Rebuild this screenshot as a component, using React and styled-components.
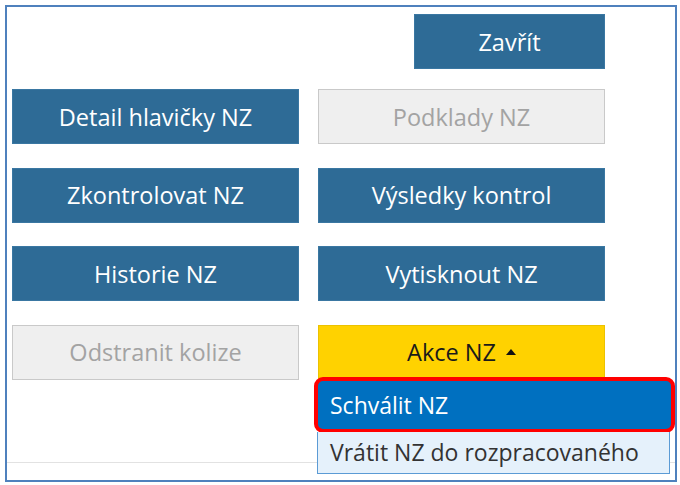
import React from "react";
import styled, { createGlobalStyle } from "styled-components";

const Global = createGlobalStyle`
  body {
    margin: 0;
    background: #ffffff;
    font-family: "Open Sans", "Noto Sans", sans-serif;
  }
`;

const Frame = styled.div`
  box-sizing: border-box;
  width: 672px;
  height: 477px;
  margin: 5px 0 0 5px;
  border: 2px solid #4f81bd;
  padding: 7px 5px 0 5px;
  display: flex;
  flex-direction: column;
`;

const TopBar = styled.div`
  display: flex;
  justify-content: flex-end;
  width: 593px;
  margin-bottom: 20px;
`;

const Grid = styled.div`
  display: grid;
  grid-template-columns: 287px 287px;
  column-gap: 19px;
  row-gap: 23.5px;
`;

const Button = styled.button`
  box-sizing: border-box;
  height: 55px;
  width: ${(p) => p.$width || "100%"};
  font-family: "Open Sans", "Noto Sans", sans-serif;
  font-size: 23.5px;
  padding: 0;
  margin: 0;
  border: 1px solid ${(p) => (p.$disabled ? "#c9c9c9" : p.$yellow ? "#ecc200" : "#3a77a2")};
  background: ${(p) => (p.$disabled ? "#efefef" : p.$yellow ? "#ffd200" : "#2e6b96")};
  color: ${(p) => (p.$disabled ? "#a3a3a3" : p.$yellow ? "#1a1a1a" : "#ffffff")};
  display: flex;
  align-items: center;
  justify-content: center;
  gap: 10px;
`;

const Cell = styled.div`
  position: relative;
`;

const Caret = styled.span`
  width: 0;
  height: 0;
  border-left: 5px solid transparent;
  border-right: 5px solid transparent;
  border-bottom: 6px solid #111;
  margin-top: -1px;
`;

const Menu = styled.div`
  position: absolute;
  top: 52px;
  left: -4px;
  width: 361px;
  display: flex;
  flex-direction: column;
  z-index: 2;
`;

const Highlight = styled.div`
  box-sizing: border-box;
  height: 56px;
  border: 4px solid #ff0000;
  border-radius: 9px;
  background: #0070c0;
  color: #ffffff;
  font-size: 23px;
  display: flex;
  align-items: center;
  padding-left: 12px;
`;

const Item = styled.div`
  box-sizing: border-box;
  height: 42px;
  margin: -1px 5px 0 3px;
  border: 1px solid #5b9bd5;
  border-top: none;
  background: #e5f1fb;
  color: #333333;
  font-size: 23px;
  display: flex;
  align-items: center;
  padding-left: 12px;
`;

const Separator = styled.div`
  margin: 82px -5px 0 -5px;
  border-top: 1px solid #e2e2e2;
`;

export default function App() {
  return (
    <>
      <Global />
      <Frame>
        <TopBar>
          <Button $width="191px">Zavřít</Button>
        </TopBar>
        <Grid>
          <Button>Detail hlavičky NZ</Button>
          <Button $disabled>Podklady NZ</Button>
          <Button>Zkontrolovat NZ</Button>
          <Button>Výsledky kontrol</Button>
          <Button>Historie NZ</Button>
          <Button>Vytisknout NZ</Button>
          <Button $disabled>Odstranit kolize</Button>
          <Cell>
            <Button $yellow>
              Akce NZ <Caret />
            </Button>
            <Menu>
              <Highlight>Schválit NZ</Highlight>
              <Item>Vrátit NZ do rozpracovaného</Item>
            </Menu>
          </Cell>
        </Grid>
        <Separator />
      </Frame>
    </>
  );
}
